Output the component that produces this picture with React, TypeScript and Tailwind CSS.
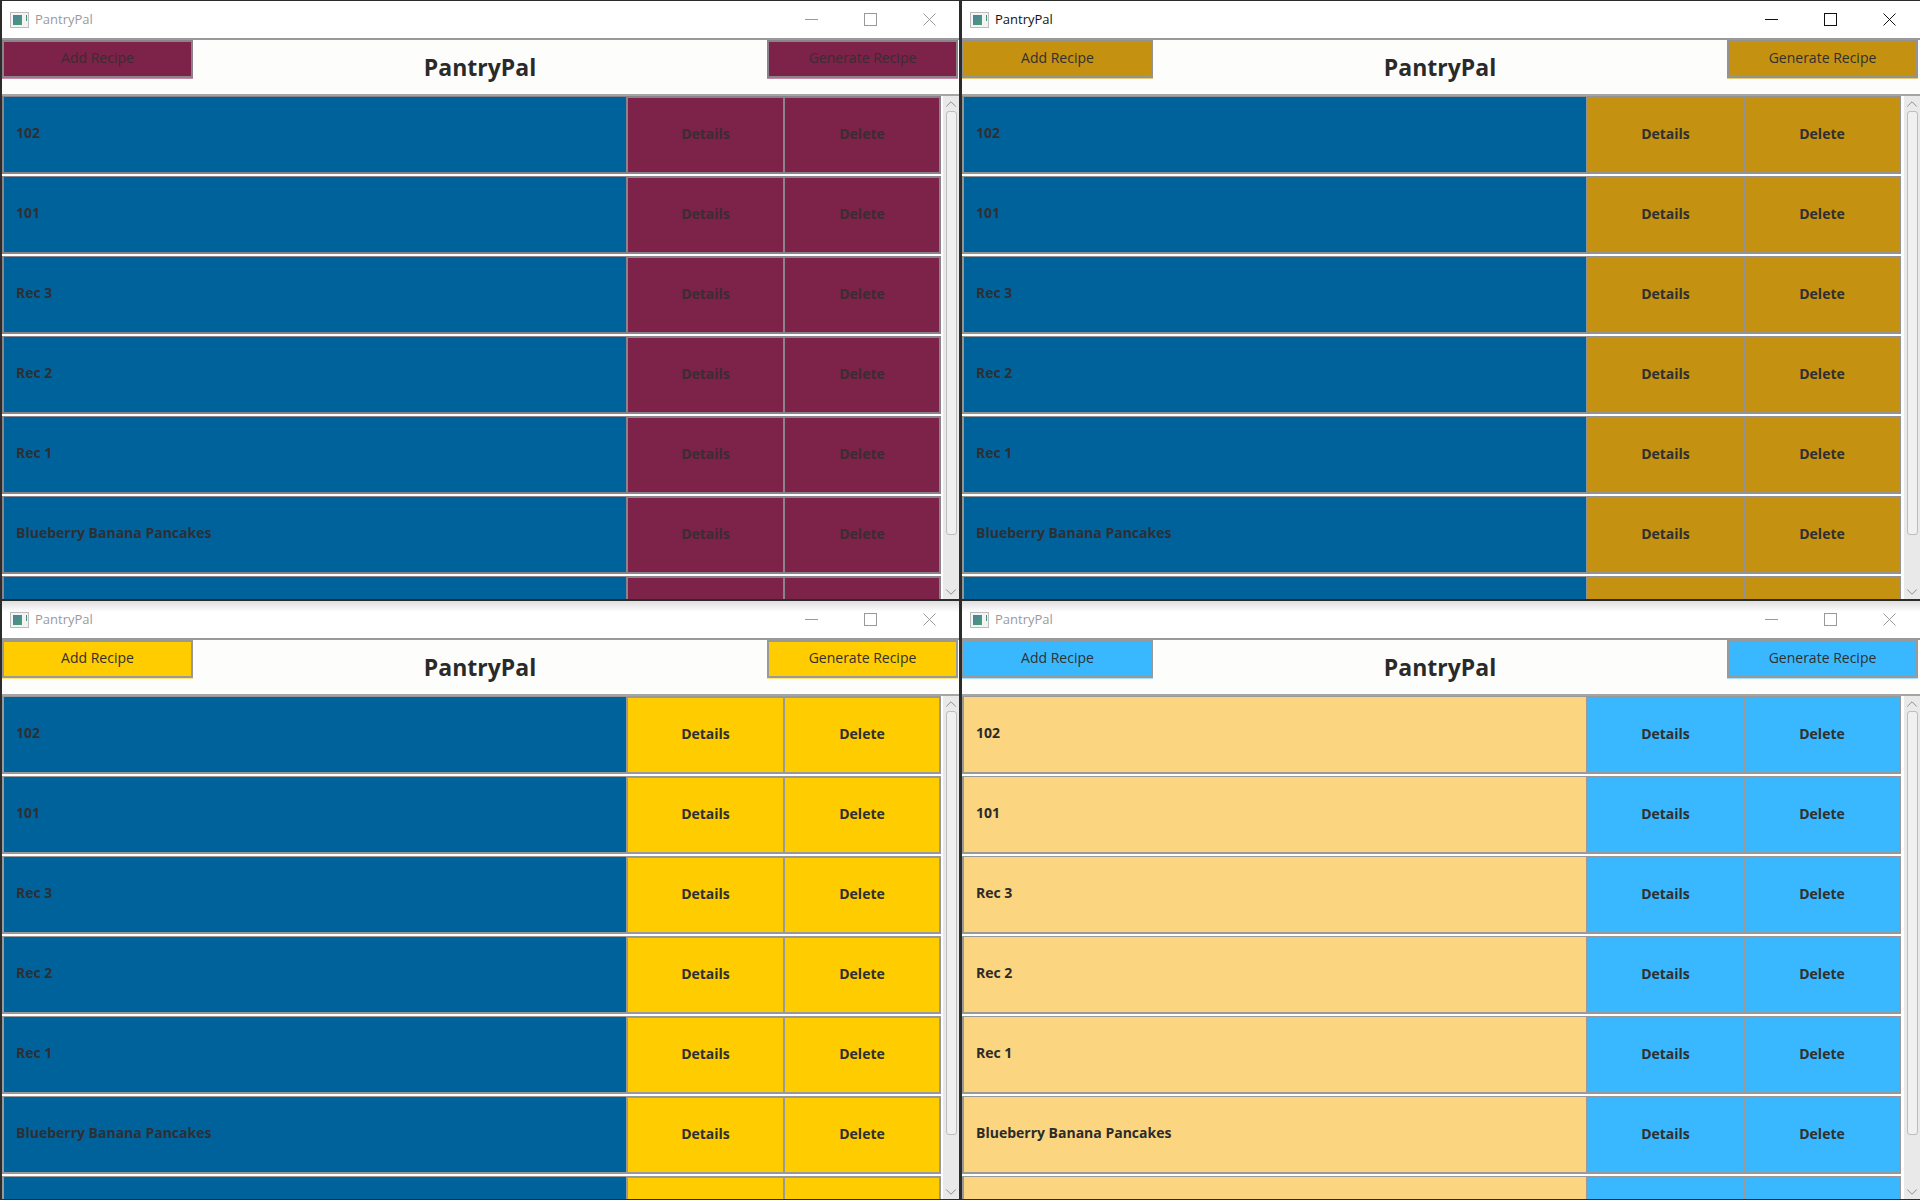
import { ChevronUp, ChevronDown } from "lucide-react";

interface Theme {
  button: string;
  buttonText: string;
  border: string;
  glow: string;
  row: string;
  rowText: string;
  titleBar: string;
  titleText: string;
  control: string;
  headerPad: string;
  controlPad: string;
}

const recipes = ["102", "101", "Rec 3", "Rec 2", "Rec 1", "Blueberry Banana Pancakes", ""];

const maroon: Theme = {
  button: "bg-[#7d2248]",
  buttonText: "text-[#3b2c35]",
  border: "border-[#8b838a]",
  glow: "shadow-[0_1px_0_0_#c98aa5]",
  row: "bg-[#00629b]",
  rowText: "text-[#2f2f33]",
  titleBar: "bg-white",
  titleText: "text-[#9a9a9a]",
  control: "text-[#999999]",
  headerPad: "pr-[1px]",
  controlPad: "pr-[23px]",
};

const mustard: Theme = {
  button: "bg-[#c49111]",
  buttonText: "text-[#303030]",
  border: "border-[#939393]",
  glow: "shadow-[0_1px_0_0_#e5c878]",
  row: "bg-[#00629b]",
  rowText: "text-[#2f2f33]",
  titleBar: "bg-white",
  titleText: "text-[#111111]",
  control: "text-[#111111]",
  headerPad: "pr-[2px]",
  controlPad: "pr-[24px]",
};

const yellow: Theme = {
  button: "bg-[#ffcc00]",
  buttonText: "text-[#303030]",
  border: "border-[#999999]",
  glow: "shadow-[0_1px_0_0_#ffe680]",
  row: "bg-[#00629b]",
  rowText: "text-[#2f2f33]",
  titleBar: "bg-gradient-to-b from-[#dedede] to-white to-[30%]",
  titleText: "text-[#9a9a9a]",
  control: "text-[#999999]",
  headerPad: "pr-[1px]",
  controlPad: "pr-[23px]",
};

const sky: Theme = {
  button: "bg-[#3ab8ff]",
  buttonText: "text-[#303030]",
  border: "border-[#999999]",
  glow: "shadow-[0_1px_0_0_#a8e0ff]",
  row: "bg-[#fbd580]",
  rowText: "text-[#2b2b2b]",
  titleBar: "bg-gradient-to-b from-[#dedede] to-white to-[30%]",
  titleText: "text-[#9a9a9a]",
  control: "text-[#999999]",
  headerPad: "pr-[2px]",
  controlPad: "pr-[24px]",
};

function AppIcon() {
  return (
    <svg width="19" height="16" viewBox="0 0 19 16" className="shrink-0">
      <defs>
        <linearGradient id="pantry-icon" x1="0" y1="0" x2="1" y2="1">
          <stop offset="0" stopColor="#4f7fa6" />
          <stop offset="1" stopColor="#46a06e" />
        </linearGradient>
      </defs>
      <rect x="0.5" y="0.5" width="18" height="15" fill="#f4f4f4" stroke="#bcbcbc" />
      <rect x="3" y="3" width="9" height="10" fill="url(#pantry-icon)" />
      <rect x="16" y="3" width="1" height="6" fill="#46907a" />
    </svg>
  );
}

function WindowControls({ className }: { className: string }) {
  return (
    <div className={`ml-auto flex items-center gap-[46px] ${className}`}>
      <svg width="13" height="13" viewBox="0 0 13 13" fill="none" stroke="currentColor">
        <path d="M0 6.5H13" />
      </svg>
      <svg width="13" height="13" viewBox="0 0 13 13" fill="none" stroke="currentColor">
        <rect x="0.5" y="0.5" width="12" height="12" />
      </svg>
      <svg width="13" height="13" viewBox="0 0 13 13" fill="none" stroke="currentColor">
        <path d="M0.5 0.5L12.5 12.5M12.5 0.5L0.5 12.5" />
      </svg>
    </div>
  );
}

function RecipeRow({ name, theme }: { name: string; theme: Theme }) {
  const cell = `flex items-center justify-center border-t pb-[4px] text-[14px] font-bold ${theme.button} ${theme.buttonText}`;
  return (
    <div className={`mb-[2px] flex h-[78px] w-[939px] shrink-0 border-t border-b-2 border-l-2 ${theme.row} ${theme.border}`}>
      <div className={`flex w-[622px] items-center pb-[4px] pl-[12px] text-[14px] font-bold ${theme.rowText}`}>
        {name}
      </div>
      <div className={`w-[157px] border-l-2 ${theme.border} ${cell}`}>{name && "Details"}</div>
      <div className={`w-[158px] border-x-2 ${theme.border} ${cell}`}>{name && "Delete"}</div>
    </div>
  );
}

function PantryWindow({ theme }: { theme: Theme }) {
  const headerButton = `h-[38px] w-[191px] border-2 pb-[3px] text-[14px] ${theme.button} ${theme.border} ${theme.buttonText} ${theme.glow}`;
  return (
    <div className="my-[1px] flex h-[598px] flex-col overflow-hidden bg-white">
      <div className={`flex h-[37px] shrink-0 items-center pl-[8px] ${theme.titleBar}`}>
        <AppIcon />
        <span className={`ml-[6px] text-[13px] ${theme.titleText}`}>PantryPal</span>
        <WindowControls className={`${theme.control} ${theme.controlPad}`} />
      </div>

      <div className={`flex h-[56px] shrink-0 items-start justify-between border-t-2 border-[#999999] bg-[#fdfdfb] ${theme.headerPad}`}>
        <button className={headerButton}>Add Recipe</button>
        <h1 className="pt-[10px] text-[23px] font-bold text-[#2a2a2a]">PantryPal</h1>
        <button className={headerButton}>Generate Recipe</button>
      </div>

      <div className="flex min-h-0 flex-1 justify-between border-t-2 border-[#a5a5a5]">
        <div className="flex flex-col">
          {recipes.map((name, i) => (
            <RecipeRow key={i} name={name} theme={theme} />
          ))}
        </div>
        <div className="flex w-[16px] flex-col items-center bg-[#e9e9e9] text-[#8c8c8c]">
          <div className="flex h-[15px] items-center">
            <ChevronUp size={18} strokeWidth={1.3} />
          </div>
          <div className="h-[424px] w-[11px] rounded-[3px] border border-[#bdbdbd] bg-[#f0f0f0]" />
          <div className="mt-auto flex h-[15px] items-center">
            <ChevronDown size={18} strokeWidth={1.3} />
          </div>
        </div>
      </div>
    </div>
  );
}

export default function App() {
  return (
    <div
      className="grid h-[1200px] w-[1920px] grid-cols-[957px_961px] grid-rows-2 overflow-hidden bg-[#2b2b2b] pl-[2px]"
      style={{ fontFamily: '"Open Sans", "Liberation Sans", sans-serif' }}
    >
      <PantryWindow theme={maroon} />
      <div className="pl-[3px]"><PantryWindow theme={mustard} /></div>
      <PantryWindow theme={yellow} />
      <div className="pl-[3px]"><PantryWindow theme={sky} /></div>
    </div>
  );
}
